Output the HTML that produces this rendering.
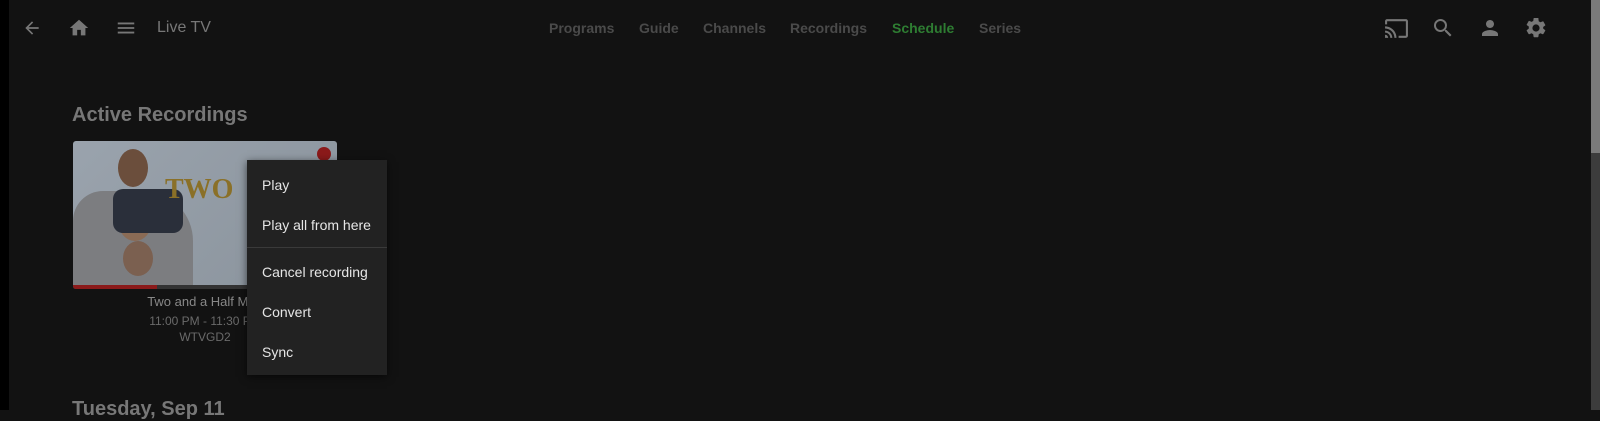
<!DOCTYPE html>
<html><head><style>
body{margin:0;width:1600px;height:410px;background:#121212;overflow:hidden;font-family:"Liberation Sans",sans-serif;position:relative}
.a{position:absolute}
.nav{color:#4a4a4a;font-weight:bold;font-size:14px;top:20px}
.mi{position:absolute;left:15px;color:#e6e6e6;font-size:14px}
</style></head><body>
<div class="a" style="left:0;top:0;width:9px;height:410px;background:#000"></div>
<div class="a" style="left:1591px;top:0;width:9px;height:153px;background:#7a7a7a"></div>
<div class="a" style="left:1591px;top:153px;width:9px;height:257px;background:#3c3c3c"></div>
<svg class="a" style="left:22px;top:18px" width="20" height="20" viewBox="0 0 24 24"><path fill="#777" d="M20 11H7.830l5.59-5.59L12 4l-8 8 8 8 1.41-1.41L7.83 13H20v-2z"/></svg>
<svg class="a" style="left:68px;top:17px" width="22" height="22" viewBox="0 0 24 24"><path fill="#777" d="M10 20v-6h4v6h5v-8h3L12 3 2 12h3v8z"/></svg>
<svg class="a" style="left:115px;top:17px" width="22" height="22" viewBox="0 0 24 24"><path fill="#777" d="M3 18h18v-2H3v2zm0-5h18v-2H3v2zm0-7v2h18V6H3z"/></svg>
<div class="a" style="left:157px;top:19px;color:#777;font-size:16px">Live TV</div>
<div class="a nav" style="left:549px">Programs</div>
<div class="a nav" style="left:639px">Guide</div>
<div class="a nav" style="left:703px">Channels</div>
<div class="a nav" style="left:790px">Recordings</div>
<div class="a nav" style="left:892px;color:#2e7d32">Schedule</div>
<div class="a nav" style="left:979px">Series</div>
<svg class="a" style="left:1384px;top:16px" width="25" height="25" viewBox="0 0 24 24"><path fill="#777" d="M21 3H3c-1.1 0-2 .9-2 2v3h2V5h18v14h-7v2h7c1.1 0 2-.9 2-2V5c0-1.1-.9-2-2-2zM1 18v3h3c0-1.66-1.34-3-3-3zm0-4v2c2.76 0 5 2.24 5 5h2c0-3.870-3.130-7-7-7zm0-4v2c4.970 0 9 4.030 9 9h2c0-6.080-4.930-11-11-11z"/></svg>
<svg class="a" style="left:1431px;top:16px" width="24" height="24" viewBox="0 0 24 24"><path fill="#777" d="M15.5 14h-.79l-.28-.27A6.47 6.47 0 0016 9.5 6.5 6.5 0 109.5 16c1.61 0 3.09-.59 4.23-1.57l.27.28v.79l5 4.99L20.49 19l-4.99-5zm-6 0C7.01 14 5 11.99 5 9.5S7.01 5 9.5 5 14 7.01 14 9.5 11.99 14 9.5 14z"/></svg>
<svg class="a" style="left:1478px;top:16px" width="24" height="24" viewBox="0 0 24 24"><path fill="#777" d="M12 12c2.21 0 4-1.79 4-4s-1.79-4-4-4-4 1.79-4 4 1.79 4 4 4zm0 2c-2.67 0-8 1.34-8 4v2h16v-2c0-2.66-5.33-4-8-4z"/></svg>
<svg class="a" style="left:1524px;top:16px" width="24" height="24" viewBox="0 0 24 24"><path fill="#777" d="M19.14 12.94c.04-.3.06-.61.06-.94s-.02-.64-.07-.94l2.03-1.58a.49.49 0 00.12-.61l-1.92-3.32a.49.49 0 00-.59-.22l-2.39.96c-.5-.38-1.03-.7-1.62-.94l-.36-2.54A.48.48 0 0013.92 2h-3.84a.48.48 0 00-.48.41l-.36 2.54c-.59.24-1.13.57-1.62.94l-2.39-.96a.48.48 0 00-.59.22L2.72 8.47a.47.47 0 00.12.61l2.03 1.58c-.05.3-.09.63-.09.94s.02.64.07.94l-2.03 1.58a.49.49 0 00-.12.61l1.92 3.32c.12.22.37.29.59.22l2.39-.96c.5.38 1.03.7 1.62.94l.36 2.54c.05.24.24.41.48.41h3.84c.24 0 .44-.17.47-.41l.36-2.54c.59-.24 1.13-.56 1.62-.94l2.390.96c.22.08.47 0 .59-.22l1.92-3.32a.48.48 0 00-.12-.61l-2.01-1.58zM12 15.6A3.6 3.6 0 1112 8.4a3.6 3.6 0 010 7.2z"/></svg>
<div class="a" style="left:72px;top:104px;color:#777;font-size:20px;font-weight:bold">Active Recordings</div>
<div class="a" style="left:73px;top:141px;width:264px;height:148px;border-radius:3px;overflow:hidden;background:linear-gradient(135deg,#9aa3ad,#8a939c)">
  <div class="a" style="left:0;top:50px;width:120px;height:98px;background:#7c7d80;border-radius:30px 50px 0 0"></div>
  <div class="a" style="left:45px;top:8px;width:30px;height:38px;background:#6b4e3c;border-radius:50%"></div>
  <div class="a" style="left:45px;top:60px;width:34px;height:40px;background:#8a6b55;border-radius:50%"></div>
  <div class="a" style="left:50px;top:100px;width:30px;height:35px;background:#7b6050;border-radius:50%"></div>
  <div class="a" style="left:40px;top:48px;width:70px;height:44px;background:#2a2f3a;border-radius:10px"></div>
  <div class="a" style="left:92px;top:33px;font:bold 28px 'Liberation Serif',serif;color:#8a7028">TWO</div>
  <div class="a" style="left:0;top:144px;width:264px;height:4px;background:#333"></div>
  <div class="a" style="left:0;top:144px;width:84px;height:4px;background:#8b1a1a"></div>
  <div class="a" style="left:244px;top:6px;width:14px;height:14px;border-radius:50%;background:#8b1a1a"></div>
</div>
<div class="a" style="left:73px;top:292px;width:264px;text-align:center;color:#888;font-size:13px;line-height:20px">Two and a Half Men</div>
<div class="a" style="left:73px;top:313px;width:264px;text-align:center;color:#6a6a6a;font-size:12px;line-height:16px">11:00 PM - 11:30 PM<br>WTVGD2</div>
<div class="a" style="left:72px;top:398px;color:#777;font-size:20px;font-weight:bold">Tuesday, Sep 11</div>
<div class="a" style="left:247px;top:160px;width:140px;height:215px;background:#222;box-shadow:0 2px 8px rgba(0,0,0,.6)">
  <div class="mi" style="top:17px">Play</div>
  <div class="mi" style="top:57px">Play all from here</div>
  <div class="a" style="left:0;top:87px;width:140px;height:1px;background:#3a3a3a"></div>
  <div class="mi" style="top:104px">Cancel recording</div>
  <div class="mi" style="top:144px">Convert</div>
  <div class="mi" style="top:184px">Sync</div>
</div>
</body></html>
